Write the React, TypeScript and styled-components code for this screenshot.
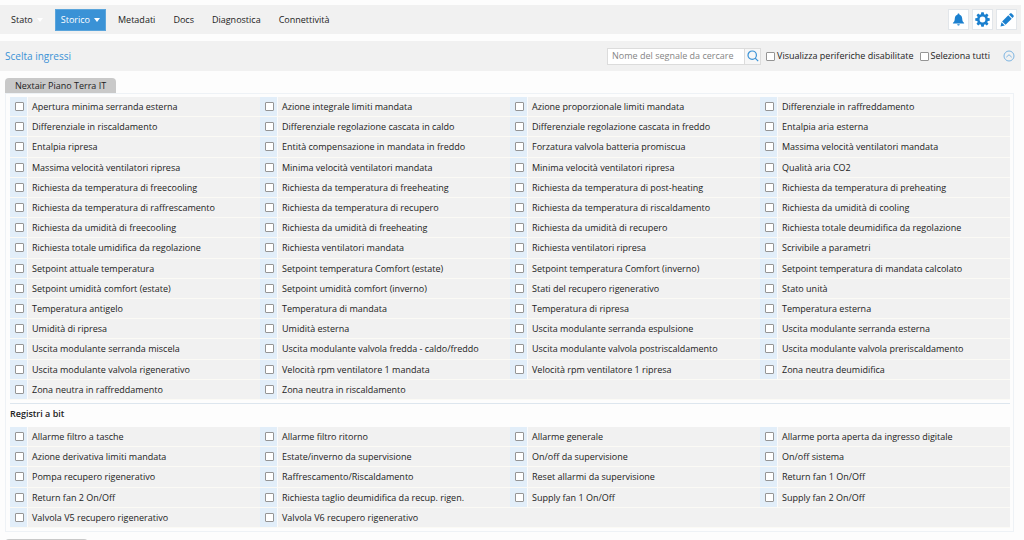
import React from "react";
import styled, { createGlobalStyle } from "styled-components";

const GlobalStyle = createGlobalStyle`
  * { box-sizing: border-box; }
  html, body { height: 100%; }
  body {
    margin: 0;
    overflow: hidden;
    background: #fdfdfd;
    color: #222;
    font-family: "Open Sans", "Noto Sans", sans-serif;
    font-size: 9px;
    line-height: 14px;
  }
  button, input { font: inherit; color: inherit; margin: 0; }
`;

const Page = styled.div`
  padding: 5px 3px 0 0;
`;

const Toolbar = styled.header`
  display: flex;
  align-items: center;
  justify-content: space-between;
  height: 29px;
  padding: 0 4px 0 5px;
  background: #f1f1f1;
`;

const Menu = styled.nav`
  display: flex;
  align-items: center;
  gap: 6px;
`;

const MenuButton = styled.button<{ $active?: boolean }>`
  display: flex;
  align-items: center;
  gap: 4px;
  height: 22px;
  padding: 0 5px;
  border: 1px solid ${(p) => (p.$active ? "#5aa5dc" : "transparent")};
  background: ${(p) => (p.$active ? "#3a92d6" : "transparent")};
  color: ${(p) => (p.$active ? "#fff" : "#222")};
`;

const Caret = styled.svg`
  width: 6px;
  height: 4px;
  fill: #fff;
`;

const Actions = styled.div`
  display: flex;
  gap: 3px;
`;

const IconButton = styled.button`
  display: flex;
  align-items: center;
  justify-content: center;
  width: 21px;
  height: 21px;
  padding: 0;
  border: 1px solid #e2e6ea;
  background: #fff;
  color: #1b80cf;
`;

const FilterBar = styled.div`
  display: flex;
  align-items: center;
  justify-content: space-between;
  height: 30px;
  margin-top: 7px;
  padding: 0 6px 0 5px;
  background: #f1f1f1;
`;

const Title = styled.h1`
  margin: 0;
  font-size: 10px;
  font-weight: 400;
  color: #3a92d6;
`;

const Filters = styled.div`
  display: flex;
  align-items: center;
`;

const Search = styled.form`
  display: flex;
  width: 154px;
  height: 17px;
  margin-right: 5px;
  border: 1px solid #dcdcdc;
  background: #fff;
`;

const SearchInput = styled.input`
  flex: 1;
  min-width: 0;
  padding: 0 4px;
  border: 0;
  outline: 0;
  background: transparent;
  &::placeholder { color: #858585; opacity: 1; }
`;

const SearchButton = styled.button`
  display: flex;
  align-items: center;
  justify-content: center;
  width: 16px;
  padding: 0;
  border: 0;
  border-left: 1px solid #dcdcdc;
  background: #f7f7f7;
  color: #3a92d6;
`;

const Check = styled.input`
  appearance: none;
  flex: none;
  width: 9px;
  height: 9px;
  border: 1px solid #959595;
  border-radius: 1px;
  background: #fff;
  &:checked { background: #3a92d6; }
`;

const FilterLabel = styled.label`
  display: flex;
  align-items: center;
  gap: 2px;
  margin-right: 6px;
`;

const CollapseButton = styled.button`
  display: flex;
  margin-left: 7px;
  padding: 0;
  border: 0;
  background: transparent;
  color: #7db5e2;
`;

const Device = styled.section`
  margin: 7px 7px 0 5px;
`;

const Tab = styled.h2`
  width: fit-content;
  height: 15px;
  min-width: 83px;
  margin: 0;
  padding: 1px 10px 0;
  border-radius: 4px 4px 0 0;
  background: #c9c9c9;
  font-size: 9px;
  font-weight: 400;
`;

const Panel = styled.div`
  padding: 3px 3px 3px 4px;
  border: 1px solid #eef2f6;
  background: #fdfdfd;
`;

const SignalGrid = styled.div<{ $minHeight: number }>`
  display: grid;
  grid-template-columns: repeat(4, 1fr);
  grid-auto-rows: 1fr;
  min-height: ${(p) => p.$minHeight}px;
`;

const SignalLabel = styled.label`
  display: flex;
  border-bottom: 1px solid #fbfaf5;
`;

const CheckCell = styled.span`
  display: flex;
  align-items: center;
  width: 18px;
  padding-left: 5px;
  border-right: 1px solid #fbfbfb;
  background: #e2eef9;
`;

const NameCell = styled.span`
  flex: 1;
  padding: 3px 0 0 4px;
  background: #f1f1f1;
  white-space: nowrap;
`;

const EmptyCell = styled.span`
  grid-column-end: -1;
  grid-column-start: 3;
  border-bottom: 1px solid #fbfaf5;
  background: #f1f1f1;
`;

const GroupTitle = styled.h3`
  margin: 3px 0 6px;
  padding-top: 3px;
  border-top: 1px solid #dde6ee;
  font-size: 9px;
  font-weight: 600;
  line-height: 14px;
`;

const analogSignals = [
  "Apertura minima serranda esterna", "Azione integrale limiti mandata", "Azione proporzionale limiti mandata", "Differenziale in raffreddamento",
  "Differenziale in riscaldamento", "Differenziale regolazione cascata in caldo", "Differenziale regolazione cascata in freddo", "Entalpia aria esterna",
  "Entalpia ripresa", "Entità compensazione in mandata in freddo", "Forzatura valvola batteria promiscua", "Massima velocità ventilatori mandata",
  "Massima velocità ventilatori ripresa", "Minima velocità ventilatori mandata", "Minima velocità ventilatori ripresa", "Qualità aria CO2",
  "Richiesta da temperatura di freecooling", "Richiesta da temperatura di freeheating", "Richiesta da temperatura di post-heating", "Richiesta da temperatura di preheating",
  "Richiesta da temperatura di raffrescamento", "Richiesta da temperatura di recupero", "Richiesta da temperatura di riscaldamento", "Richiesta da umidità di cooling",
  "Richiesta da umidità di freecooling", "Richiesta da umidità di freeheating", "Richiesta da umidità di recupero", "Richiesta totale deumidifica da regolazione",
  "Richiesta totale umidifica da regolazione", "Richiesta ventilatori mandata", "Richiesta ventilatori ripresa", "Scrivibile a parametri",
  "Setpoint attuale temperatura", "Setpoint temperatura Comfort (estate)", "Setpoint temperatura Comfort (inverno)", "Setpoint temperatura di mandata calcolato",
  "Setpoint umidità comfort (estate)", "Setpoint umidità comfort (inverno)", "Stati del recupero rigenerativo", "Stato unità",
  "Temperatura antigelo", "Temperatura di mandata", "Temperatura di ripresa", "Temperatura esterna",
  "Umidità di ripresa", "Umidità esterna", "Uscita modulante serranda espulsione", "Uscita modulante serranda esterna",
  "Uscita modulante serranda miscela", "Uscita modulante valvola fredda - caldo/freddo", "Uscita modulante valvola postriscaldamento", "Uscita modulante valvola preriscaldamento",
  "Uscita modulante valvola rigenerativo", "Velocità rpm ventilatore 1 mandata", "Velocità rpm ventilatore 1 ripresa", "Zona neutra deumidifica",
  "Zona neutra in raffreddamento", "Zona neutra in riscaldamento",
];

const bitSignals = [
  "Allarme filtro a tasche", "Allarme filtro ritorno", "Allarme generale", "Allarme porta aperta da ingresso digitale",
  "Azione derivativa limiti mandata", "Estate/inverno da supervisione", "On/off da supervisione", "On/off sistema",
  "Pompa recupero rigenerativo", "Raffrescamento/Riscaldamento", "Reset allarmi da supervisione", "Return fan 1 On/Off",
  "Return fan 2 On/Off", "Richiesta taglio deumidifica da recup. rigen.", "Supply fan 1 On/Off", "Supply fan 2 On/Off",
  "Valvola V5 recupero rigenerativo", "Valvola V6 recupero rigenerativo",
];

const menuItems = [
  { name: "Stato", caret: true },
  { name: "Storico", caret: true, active: true },
  { name: "Metadati" },
  { name: "Docs" },
  { name: "Diagnostica" },
  { name: "Connettività" },
];

function Signals({ names, minHeight }: { names: string[]; minHeight: number }) {
  return (
    <SignalGrid $minHeight={minHeight}>
      {names.map((name) => (
        <SignalLabel key={name}>
          <CheckCell><Check type="checkbox" /></CheckCell>
          <NameCell>{name}</NameCell>
        </SignalLabel>
      ))}
      <EmptyCell />
    </SignalGrid>
  );
}

const BellIcon = () => (
  <svg width="13" height="13" viewBox="0 0 13 13" fill="currentColor">
    <path d="M6.5.4c.6 0 1 .4 1 1v.3C9.200 2.200 10.100 3.600 10.200 5.400c.1 2.300.5 3.300 1.900 4.500v.7H.9v-.7C2.300 8.700 2.700 7.700 2.800 5.400 2.900 3.600 3.800 2.200 5.500 1.700v-.3c0-.6.4-1 1-1zM5.200 11.200h2.600c-.1.8-.6 1.300-1.300 1.300s-1.200-.5-1.300-1.300z" />
  </svg>
);

const GearIcon = () => (
  <svg width="15" height="15" viewBox="0 0 16 16" fill="currentColor" fillRule="evenodd">
    <path d="M6.700.3h2.600l.4 2.100 1.100.5 1.800-1.300 1.800 1.800-1.300 1.800.5 1.100 2.100.4v2.600l-2.100.4-.5 1.100 1.300 1.800-1.800 1.800-1.800-1.300-1.100.5-.4 2.100H6.700l-.4-2.100-1.100-.5-1.800 1.300-1.800-1.800 1.300-1.800-.5-1.100-2.100-.4V6.700l2.100-.4.5-1.100-1.300-1.800 1.800-1.800 1.800 1.300 1.100-.5zM8 4.900a3.100 3.100 0 1 0 0 6.200 3.100 3.100 0 0 0 0-6.200z" />
  </svg>
);

const PencilIcon = () => (
  <svg width="14" height="14" viewBox="0 0 14 14" fill="currentColor">
    <path d="M10 .6c.5-.5 1.200-.5 1.700 0l1.700 1.700c.5.500.5 1.200 0 1.700l-1 1L9 1.600zM8.300 2.300l3.400 3.400-6.100 6.100-3.500-3.400zM1.500 9.200l3.300 3.300-4.300 1z" />
  </svg>
);

export default function App() {
  return (
    <>
      <GlobalStyle />
      <Page>
        <Toolbar>
          <Menu>
            {menuItems.map((item) => (
              <MenuButton key={item.name} type="button" $active={item.active}>
                {item.name}
                {item.caret && <Caret viewBox="0 0 6 4"><path d="M0 0h6L3 4z" /></Caret>}
              </MenuButton>
            ))}
          </Menu>
          <Actions>
            <IconButton type="button" aria-label="Allarmi"><BellIcon /></IconButton>
            <IconButton type="button" aria-label="Impostazioni"><GearIcon /></IconButton>
            <IconButton type="button" aria-label="Modifica"><PencilIcon /></IconButton>
          </Actions>
        </Toolbar>

        <FilterBar>
          <Title>Scelta ingressi</Title>
          <Filters>
            <Search onSubmit={(e) => e.preventDefault()}>
              <SearchInput aria-label="Nome del segnale da cercare" placeholder="Nome del segnale da cercare" />
              <SearchButton type="submit" aria-label="Cerca">
                <svg width="12" height="12" viewBox="0 0 12 12" fill="none" stroke="currentColor" strokeWidth="1.200">
                  <circle cx="5.200" cy="5.200" r="4.200" />
                  <path d="M8.200 8.200l3 3" />
                </svg>
              </SearchButton>
            </Search>
            <FilterLabel><Check type="checkbox" />Visualizza periferiche disabilitate</FilterLabel>
            <FilterLabel><Check type="checkbox" />Seleziona tutti</FilterLabel>
            <CollapseButton type="button" aria-label="Comprimi">
              <svg width="12" height="12" viewBox="0 0 12 12" fill="none" stroke="currentColor">
                <circle cx="6" cy="6" r="5" />
                <path d="M3.300 7.200L6 4.700l2.700 2.500" />
              </svg>
            </CollapseButton>
          </Filters>
        </FilterBar>

        <Device>
          <Tab>Nextair Piano Terra IT</Tab>
          <Panel>
            <Signals names={analogSignals} minHeight={303} />
            <GroupTitle>Registri a bit</GroupTitle>
            <Signals names={bitSignals} minHeight={101} />
          </Panel>
        </Device>
        <Device>
          <Tab />
        </Device>
      </Page>
    </>
  );
}
